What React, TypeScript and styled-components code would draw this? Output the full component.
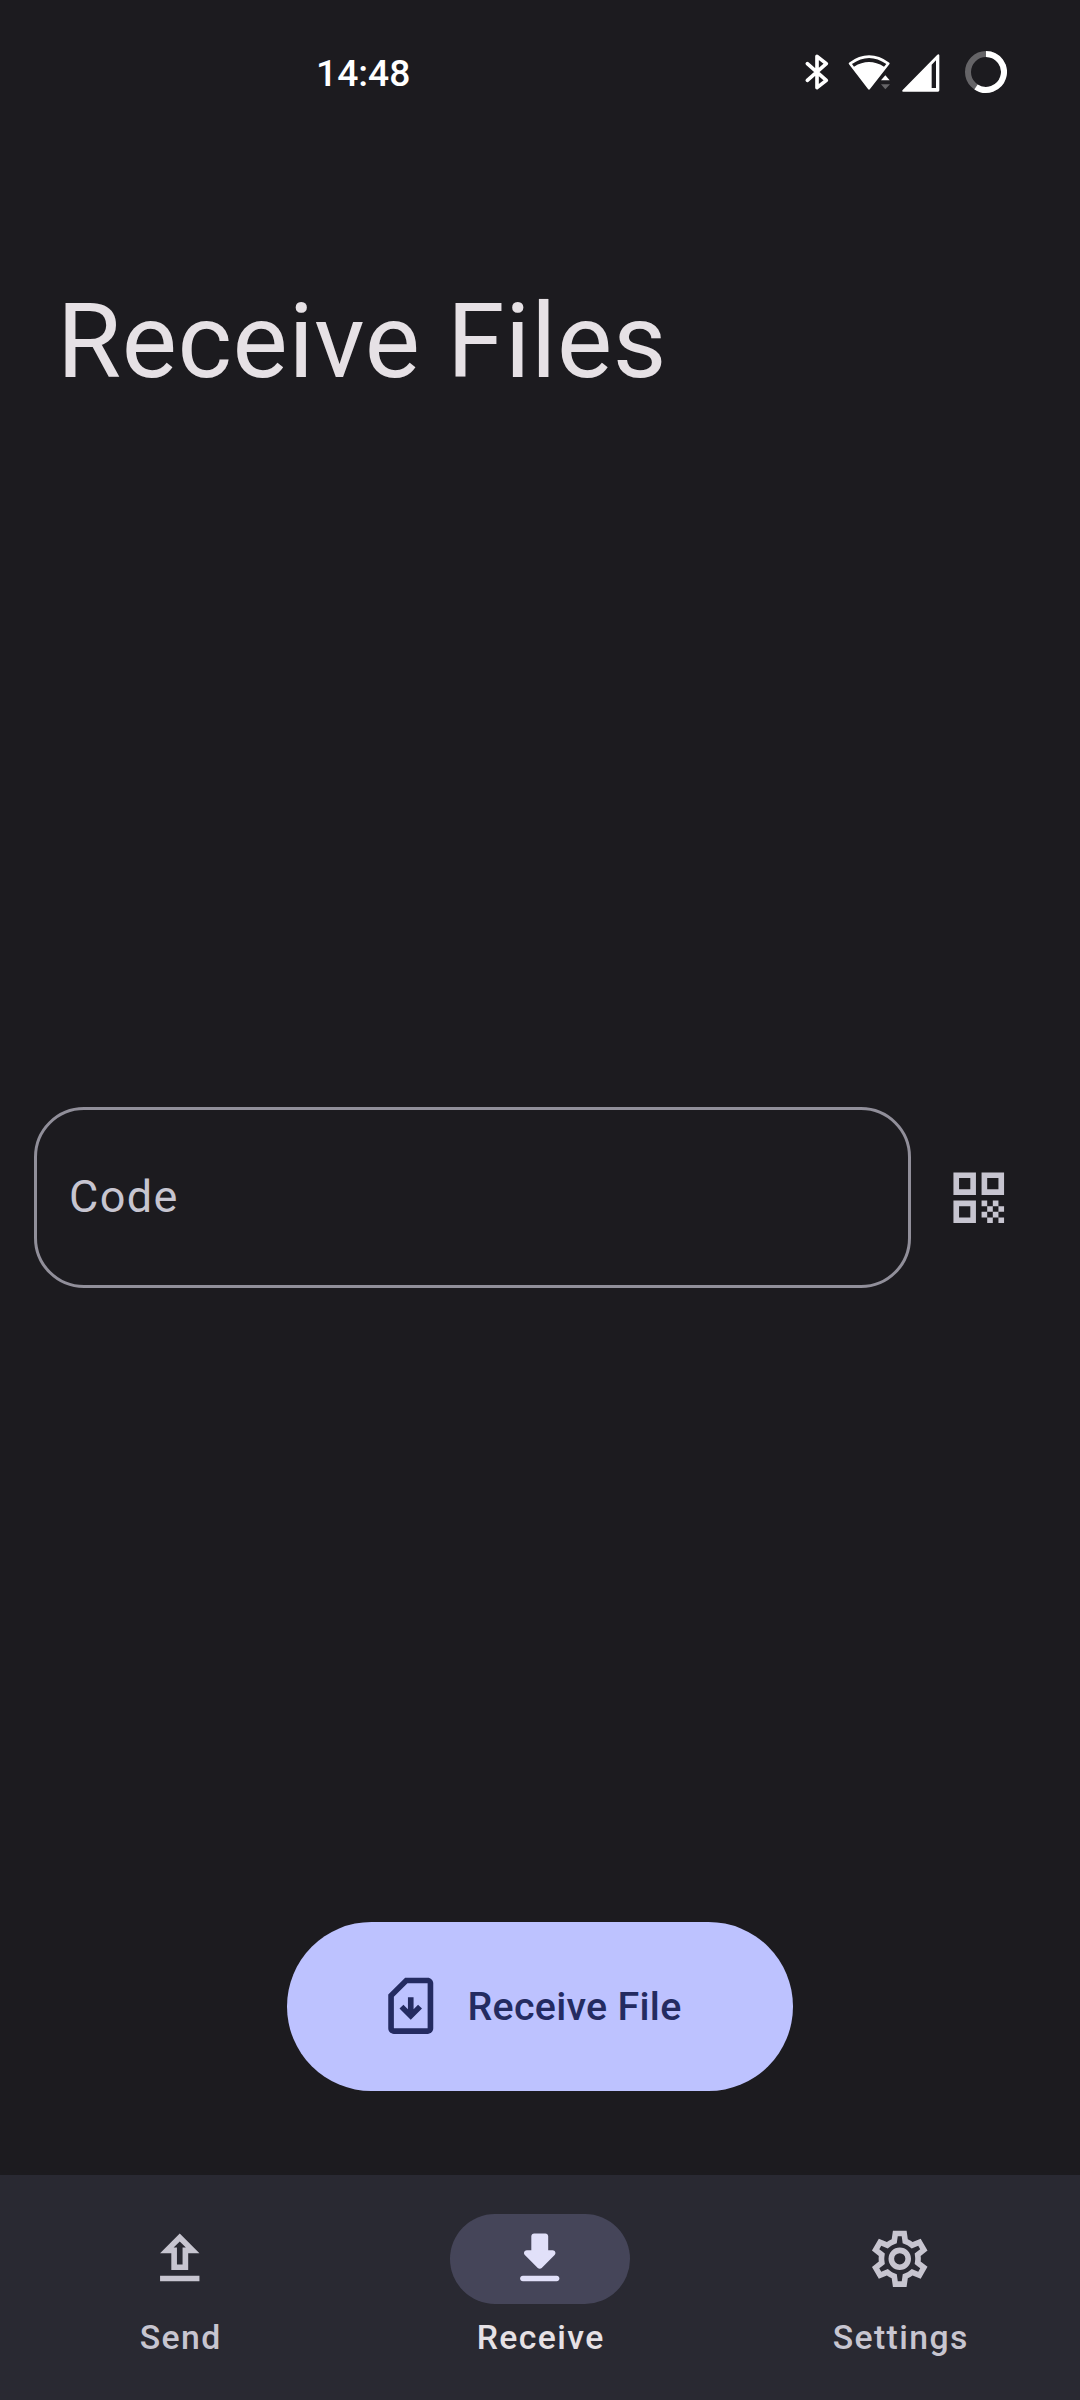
import React from "react";
import styled, { createGlobalStyle } from "styled-components";

const GlobalStyle = createGlobalStyle`
  html, body { margin: 0; padding: 0; background: #1c1b1f; }
  * { box-sizing: border-box; }
`;

const Screen = styled.div`
  width: 1080px;
  height: 2400px;
  display: flex;
  flex-direction: column;
  overflow: hidden;
  background: #1c1b1f;
  font-family: Roboto, "Noto Sans", sans-serif;
`;

const StatusBar = styled.header`
  height: 144px;
  flex: none;
  display: flex;
  align-items: center;
  justify-content: space-between;
  padding: 0 73px 0 316px;
`;

const Clock = styled.time`
  padding-top: 2px;
  font-size: 37.2px;
  font-weight: 500;
  line-height: 44px;
  color: #fff;
`;

const StatusIcons = styled.div`
  display: flex;
  height: 60px;
`;

const Title = styled.h1`
  margin: 136px 0 0 57px;
  font-size: 104px;
  font-weight: 400;
  line-height: 124px;
  letter-spacing: 0.65px;
  color: #e6e1e5;
  white-space: nowrap;
`;

const Main = styled.main`
  flex: 1;
  display: flex;
  flex-direction: column;
  align-items: center;
`;

const CodeRow = styled.div`
  align-self: stretch;
  display: flex;
  align-items: center;
  margin-top: 703px;
  padding: 0 67px 0 34px;
`;

const CodeField = styled.div`
  width: 877px;
  height: 181px;
  display: flex;
  align-items: center;
  padding: 0 0 2px 32px;
  border: 3px solid #918f9a;
  border-radius: 50px;
  color: #c7c5d0;
  font-size: 45px;
  letter-spacing: 1.4px;
`;

const IconButton = styled.button`
  display: flex;
  margin: 0 0 0 34px;
  padding: 0;
  border: 0;
  background: none;
  color: #c7c5d0;
`;

const ReceiveButton = styled.button`
  width: 506px;
  height: 169px;
  display: flex;
  align-items: center;
  gap: 23px;
  margin: 0;
  padding: 0 0 1px 90px;
  border: 0;
  border-radius: 85px;
  background: #bdc2ff;
  color: #242b61;
  font-family: inherit;
  font-size: 39.4px;
  font-weight: 500;
  letter-spacing: 0.28px;
`;

const Spacer = styled.div`
  flex: 1;
`;

const NavBar = styled.nav`
  height: 225px;
  flex: none;
  display: grid;
  grid-template-columns: repeat(3, 1fr);
  margin-top: 84px;
  background: #292932;
`;

const NavItem = styled.a<{ $active?: boolean }>`
  display: flex;
  flex-direction: column;
  align-items: center;
  padding-top: 39px;
  color: ${(p) => (p.$active ? "#e6e1e5" : "#c7c5d0")};
`;

const Indicator = styled.span<{ $active?: boolean }>`
  width: 180px;
  height: 90px;
  display: flex;
  align-items: center;
  justify-content: center;
  border-radius: 45px;
  background: ${(p) => (p.$active ? "#454559" : "transparent")};
  color: ${(p) => (p.$active ? "#e1e0f9" : "inherit")};
`;

const NavLabel = styled.span`
  margin-top: 11px;
  padding-left: 1.4px;
  font-size: 33.75px;
  line-height: 45px;
  font-weight: 500;
  letter-spacing: 1.4px;
`;

const Glyph = ({ d }: { d: string }) => (
  <svg width="67.5" height="67.5" viewBox="0 0 24 24" fill="currentColor" fillRule="evenodd">
    <path d={d} />
  </svg>
);

const ICONS = {
  qr: "M3 11h8V3H3v8zm2-6h4v4H5V5zM3 21h8v-8H3v8zm2-6h4v4H5v-4zM13 3v8h8V3h-8zm6 6h-4V5h4v4zM19 19h2v2h-2zM13 13h2v2h-2zM15 15h2v2h-2zM13 17h2v2h-2zM15 19h2v2h-2zM17 17h2v2h-2zM17 13h2v2h-2zM19 15h2v2h-2z",
  fileDown:
    "M18 2h-8L4 8v12c0 1.1.9 2 2 2h12c1.1 0 2-.9 2-2V4c0-1.1-.9-2-2-2zm0 18H6V8.83L10.83 4H18v16zM11 9h2v4.2l1.6-1.6L16 13l-4 4-4-4 1.4-1.4 1.6 1.6z",
  send: "M9 16h6v-6h4l-7-7-7 7h4v6zm3-10.17L14.17 8H13v6h-2V8H9.83L12 5.83zM5 18h14v2H5v-2z",
  receive:
    "M16.59 9H15V4c0-.55-.45-1-1-1h-4c-.55 0-1 .45-1 1v5H7.41c-.89 0-1.34 1.08-.71 1.71l4.59 4.59c.39.39 1.02.39 1.41 0l4.59-4.59c.63-.63.19-1.71-.7-1.71zM5 19c0 .55.45 1 1 1h12c.55 0 1-.45 1-1s-.45-1-1-1H6c-.55 0-1 .45-1 1z",
  settings:
    "M19.43 12.99c.04-.33.07-.65.07-.99 0-.34-.03-.66-.07-.99l2.44-1.9-2.43-4.22-2.87 1.16c-.52-.4-1.09-.74-1.7-1L14.44 2H9.57l-.44 3.05c-.62.26-1.19.6-1.7 1L4.56 4.89 2.12 9.11l2.44 1.9c-.04.33-.07.65-.07.99 0 .34.03.68.07.99l-2.43 1.91 2.43 4.2 2.87-1.15c.52.4 1.08.74 1.7 1L9.58 22h4.85l.44-3.07c.62-.26 1.18-.6 1.7-1l2.87 1.15 2.43-4.2zM17.45 11.27c.04.31.05.52.05.73 0 .21-.02.43-.05.73l-.14 1.13.89.7 1.08.84-.7 1.21-1.27-.51-1.04-.42-.9.68c-.43.32-.84.56-1.25.73l-1.06.43-.16 1.13-.2 1.35h-1.4l-.19-1.35-.16-1.13-1.06-.43c-.43-.18-.83-.41-1.23-.71l-.91-.7-1.06.43-1.27.51-.7-1.21 1.08-.84.89-.7-.14-1.13c-.03-.31-.05-.54-.05-.74s.02-.43.05-.73l.14-1.13-.89-.7-1.08-.84.7-1.21 1.27.51 1.04.42.9-.68c.43-.32.84-.56 1.25-.73l1.06-.43.16-1.13.2-1.35h1.39l.19 1.35.16 1.13 1.06.43c.43.18.83.41 1.23.71l.91.7 1.06-.43 1.27-.51.7 1.21-1.07.85-.89.7.14 1.13zM12 8a4 4 0 1 0 0 8 4 4 0 1 0 0-8zM12 10a2 2 0 1 1 0 4 2 2 0 1 1 0-4z",
};

const BluetoothIcon = () => (
  <svg width="44" height="60" viewBox="69 36 132 180" fill="none" stroke="#fff" strokeWidth="11" strokeLinecap="round" strokeLinejoin="round">
    <path d="M82 101L139 151L111 173V79L139 101L82 151" />
  </svg>
);

const WifiIcon = () => (
  <svg width="52" height="60" viewBox="201 36 156 180">
    <path
      d="M207 98Q267 54 328 98Q330 100 328 103L270 177Q267 181 264 177L207 103Q205 100 207 98ZM216 102L222 110Q267 82 312 110L319 102Q267 66 216 102Z"
      fill="#fff"
      fillRule="evenodd"
    />
    <path d="M316 136L329 151H303Z" fill="#fff" />
    <path d="M303 163H330L316 178Z" fill="#656467" />
  </svg>
);

const SignalIcon = () => (
  <svg width="52" height="60" viewBox="357 36 156 180">
    <path
      d="M368 180L472 74Q477 70 478 76V181Q478 185 474 185H370Q364 185 368 180ZM455 104V174H468V91Z"
      fill="#fff"
      fillRule="evenodd"
    />
  </svg>
);

const BatteryIcon = () => (
  <svg width="56" height="60" viewBox="513 36 168 180" fill="none" strokeWidth="18">
    <circle cx="618" cy="126" r="54" stroke="#656467" />
    <path d="M618 72A54 54 0 1 1 588 171" stroke="#fff" />
  </svg>
);

const TABS = [
  { label: "Send", icon: ICONS.send, active: false },
  { label: "Receive", icon: ICONS.receive, active: true },
  { label: "Settings", icon: ICONS.settings, active: false },
];

export default function App() {
  return (
    <Screen>
      <GlobalStyle />
      <StatusBar>
        <Clock>14:48</Clock>
        <StatusIcons>
          <BluetoothIcon />
          <WifiIcon />
          <SignalIcon />
          <BatteryIcon />
        </StatusIcons>
      </StatusBar>
      <Title>Receive Files</Title>
      <Main>
        <CodeRow>
          <CodeField>Code</CodeField>
          <IconButton aria-label="Scan QR code">
            <Glyph d={ICONS.qr} />
          </IconButton>
        </CodeRow>
        <Spacer />
        <ReceiveButton>
          <Glyph d={ICONS.fileDown} />
          Receive File
        </ReceiveButton>
      </Main>
      <NavBar>
        {TABS.map((tab) => (
          <NavItem key={tab.label} $active={tab.active}>
            <Indicator $active={tab.active}>
              <Glyph d={tab.icon} />
            </Indicator>
            <NavLabel>{tab.label}</NavLabel>
          </NavItem>
        ))}
      </NavBar>
    </Screen>
  );
}
